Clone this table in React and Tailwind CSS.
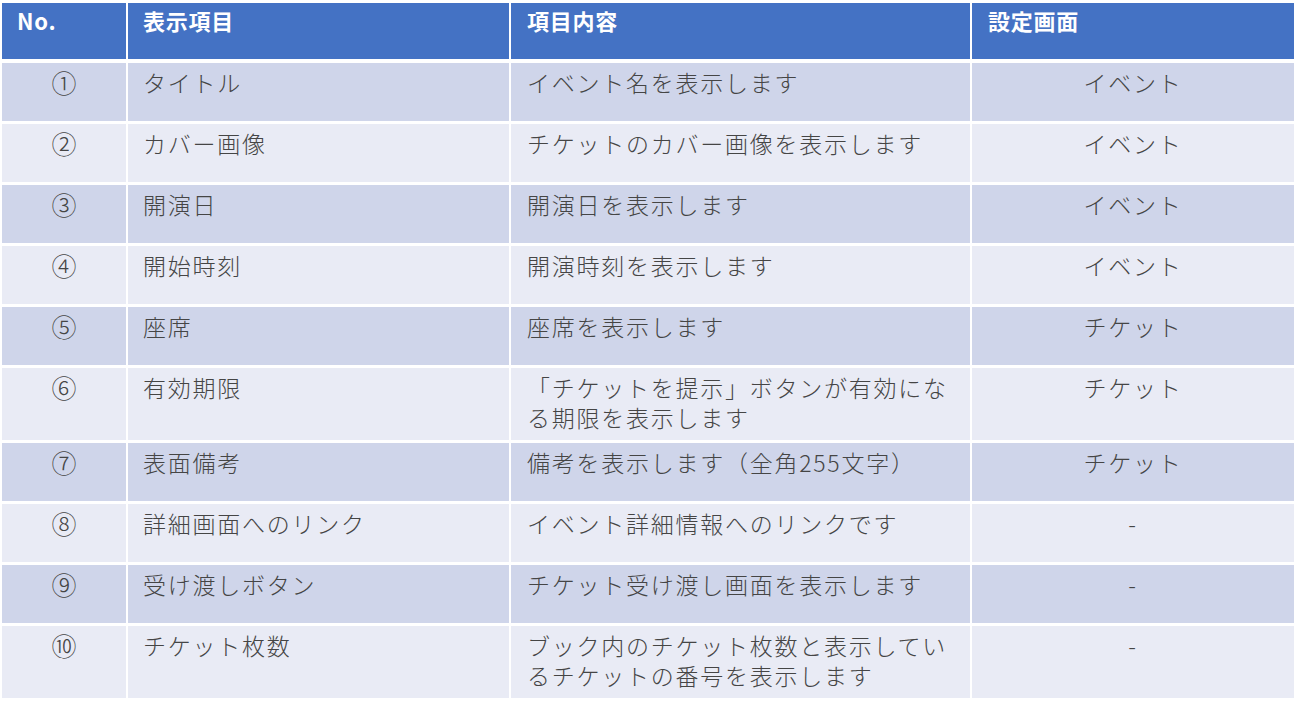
const rows = [
  { no: "①", item: "タイトル", desc: ["イベント名を表示します"], screen: "イベント" },
  { no: "②", item: "カバー画像", desc: ["チケットのカバー画像を表示します"], screen: "イベント" },
  { no: "③", item: "開演日", desc: ["開演日を表示します"], screen: "イベント" },
  { no: "④", item: "開始時刻", desc: ["開演時刻を表示します"], screen: "イベント" },
  { no: "⑤", item: "座席", desc: ["座席を表示します"], screen: "チケット" },
  { no: "⑥", item: "有効期限", desc: ["「チケットを提示」ボタンが有効にな", "る期限を表示します"], screen: "チケット" },
  { no: "⑦", item: "表面備考", desc: ["備考を表示します（全角255文字）"], screen: "チケット" },
  { no: "⑧", item: "詳細画面へのリンク", desc: ["イベント詳細情報へのリンクです"], screen: "-" },
  { no: "⑨", item: "受け渡しボタン", desc: ["チケット受け渡し画面を表示します"], screen: "-" },
  { no: "⑩", item: "チケット枚数", desc: ["ブック内のチケット枚数と表示してい", "るチケットの番号を表示します"], screen: "-" },
];

const cols = "grid grid-cols-[124px_381px_459px_322px] gap-x-[2px]";

export default function App() {
  return (
    <div
      className="min-h-[707px] w-[1300px] bg-white pl-[2px] pt-[3px]"
      style={{ fontFamily: '"Noto Sans CJK JP", "Noto Sans", sans-serif' }}
    >
      {/* header */}
      <div className={`${cols} h-[56px] text-[22px] font-bold tracking-[0.75px] text-white`}>
        <div className="bg-[#4472c4] pl-[15px] pt-[1px]">No.</div>
        <div className="bg-[#4472c4] pl-[15px] pt-[1px]">表示項目</div>
        <div className="bg-[#4472c4] pl-[16px] pt-[1px]">項目内容</div>
        <div className="bg-[#4472c4] pl-[16px] pt-[1px]">設定画面</div>
      </div>

      <div className="mt-[4px] flex flex-col gap-y-[3px] text-[23px] font-light leading-[30px] tracking-[1.75px] text-[#454545]">
        {rows.map((row, i) => {
          const bg = i % 2 === 0 ? "bg-[#cfd5ea]" : "bg-[#e9ebf5]";
          const h = row.desc.length > 1 ? "h-[72px]" : "h-[58px]";
          return (
            <div key={row.no} className={`${cols} ${h}`}>
              <div className={`${bg} pt-[4px] text-center text-[25px] tracking-normal`}>{row.no}</div>
              <div className={`${bg} pl-[15px] pt-[4px]`}>{row.item}</div>
              <div className={`${bg} pl-[16px] pt-[4px]`}>
                {row.desc.map((line) => (
                  <div key={line}>{line}</div>
                ))}
              </div>
              <div className={`${bg} pt-[4px] text-center`}>{row.screen}</div>
            </div>
          );
        })}
      </div>
    </div>
  );
}
